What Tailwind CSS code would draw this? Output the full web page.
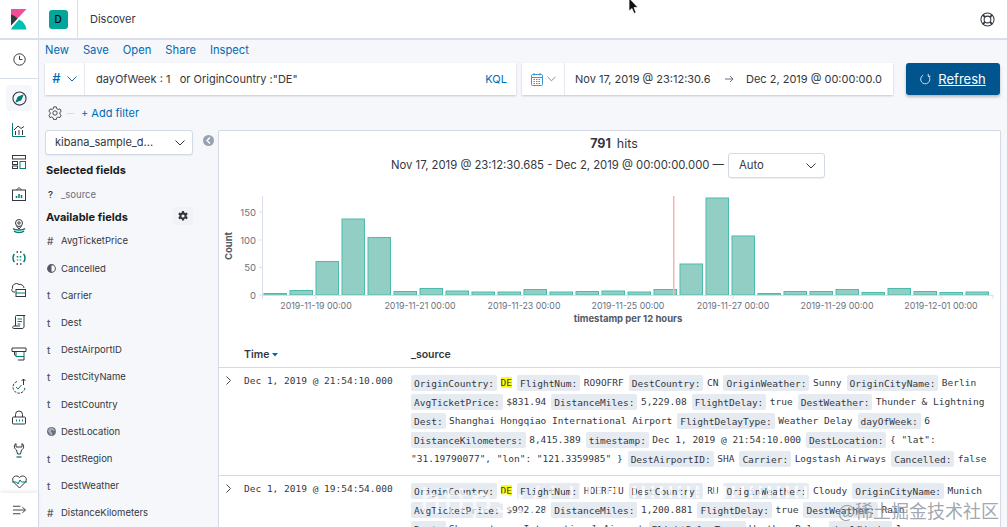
<!DOCTYPE html>
<html lang="en">

<head>
    <meta charset="UTF-8">
    <title>Discover - Kibana</title>
    <script src="https://cdn.jsdelivr.net/npm/@tailwindcss/browser@4"></script>
</head>

<body class="bg-[#f5f7fa] font-['Inter',sans-serif] text-[#343741]">
    <div class="relative w-[1007px] h-[527px] overflow-hidden flex flex-col">
        <!-- top bar -->
        <header class="relative z-20 h-[40px] shrink-0 bg-white border-b-2 border-[#d9dfea] flex items-center">
            <div class="w-[38px] h-full flex items-center justify-center">
                <svg width="16" height="21" viewBox="0 0 16 21">
                    <path fill="#f04e98" d="M0 0h15.5L0 16.5z" />
                    <path fill="#343741" d="M0 5.5v11l6.5-7A13 13 0 0 0 0 5.5z" />
                    <path fill="#00bfb3" d="M8 10.5 1 18.5 0 20.5h15.5A13 13 0 0 0 8 10.5z" />
                </svg>
            </div>
            <div class="w-[39px] h-full border-l border-[#d9dfea] flex items-center justify-center">
                <div class="w-[19px] h-[19px] rounded-[3px] bg-[#00a69b] text-[10px] font-medium text-black flex items-center justify-center">D</div>
            </div>
            <div class="h-full border-l border-[#d9dfea] pl-[12px] flex items-center text-[11px] text-[#343741]">Discover</div>
            <svg class="ml-auto mr-[12px]" width="15" height="15" viewBox="0 0 16 16" fill="none" stroke="#343741" stroke-width="1.1">
                <circle cx="8" cy="8" r="7" />
                <circle cx="8" cy="8" r="3.6" />
                <path d="M3 3l2.4 2.4M13 3l-2.4 2.4M3 13l2.4-2.4M13 13l-2.4-2.4" stroke-width="2" />
            </svg>
        </header>

        <div class="flex flex-1 min-h-0">
            <!-- side nav -->
            <nav class="relative w-[39px] shrink-0 bg-white border-r border-[#d9dfea] flex flex-col items-center">
                <div class="h-[39px] w-full border-b border-[#d9dfea] flex items-center justify-center">
                    <svg width="13" height="13" viewBox="0 0 16 16" fill="none" stroke="#343741" stroke-width="1.2"><circle cx="8" cy="8" r="7" /><path d="M8 3.5V8h3.5" /></svg>
                </div>
                <div class="mt-[6px] w-[26px] h-[26px] rounded-[4px] bg-[#f5f7fa] flex items-center justify-center">
                    <svg width="15" height="15" viewBox="0 0 16 16" fill="none" stroke="#343741" stroke-width="1.2"><circle cx="8" cy="8" r="7" /><path d="M11.5 4.5 9.5 9.5 4.5 11.5 6.5 6.5z" fill="#017d73" stroke="#017d73" /></svg>
                </div>
                <div class="flex flex-col items-center gap-[16px] mt-[11px]">
                    <svg width="16" height="16" viewBox="0 0 16 16" fill="none" stroke="#343741"><path d="M1.5 1v13.5h13" stroke="#017d73" /><path d="M3 8l4-4 3 2.500 3-2M4.500 9v4M8 8v5M11.500 8v5" /></svg>
                    <svg width="16" height="16" viewBox="0 0 16 16" fill="none" stroke="#343741"><rect x="1.500" y="1.500" width="13" height="3.500" /><rect x="1.500" y="7.500" width="5" height="3" /><rect x="1.500" y="12" width="5" height="2.500" /><rect x="9" y="7.500" width="5.500" height="7" stroke="#017d73" /></svg>
                    <svg width="16" height="16" viewBox="0 0 16 16" fill="none" stroke="#343741"><rect x="1.500" y="4" width="13" height="10.500" /><path d="M5.500 4 8 1.500 10.500 4" /><path d="M5.500 12v-2M8 12V8M10.500 12V9" stroke="#017d73" stroke-width="1.500" /></svg>
                    <svg width="16" height="16" viewBox="0 0 16 16" fill="none" stroke="#343741"><circle cx="8" cy="5" r="3.500" /><circle cx="8" cy="5" r="1.200" /><path d="M8 11 5.500 8M8 11l2.500-3" /><path d="M2 10.500c2 2 10 2 12 0M3 13c2 2 8 2 10 0" stroke="#017d73" stroke-width="1.300" /></svg>
                    <svg width="16" height="16" viewBox="0 0 16 16" fill="none" stroke="#343741" stroke-width="1.500"><path d="M5.500 2h1.500M9 2h1.500M5.500 14h1.500M9 14h1.500" /><path d="M3.500 4C1.500 6 1.500 10 3.500 12M12.500 4c2 2 2 6 0 8" stroke="#017d73" /><path d="M6.500 6v1.500M9.500 6v1.500M6.500 9.500v1M9.500 9.500v1" stroke="#017d73" /></svg>
                    <svg width="16" height="16" viewBox="0 0 16 16" fill="none" stroke="#343741"><path d="M4 10H3a2 2 0 0 1-1.500-3.500A4 4 0 0 1 8 2.500a4 4 0 0 1 5 3.500" /><rect x="5" y="7.500" width="9.500" height="7" /><path d="M5 11h9.500" stroke="#017d73" /></svg>
                    <svg width="16" height="16" viewBox="0 0 16 16" fill="none" stroke="#343741"><path d="M4.500 12V2.500a1 1 0 0 1 1-1h8.500v.5M13 1.500V12a2 2 0 0 1-2 2.500H2.500c-1 0-1-2 0-2.500H9" /><path d="M6.500 5h4.500M6.500 7.500h4.500M6.500 10h3" stroke="#017d73" /></svg>
                    <svg width="16" height="16" viewBox="0 0 16 16" fill="none" stroke="#343741"><path d="M1 2h14v3.500H1zM3.500 5.500V9l1.500 1" /><path d="M5 6v4.500h8V6" stroke="#017d73" /><path d="M13 10.500V14H7" /></svg>
                    <svg width="16" height="16" viewBox="0 0 16 16" fill="none" stroke="#343741"><path d="M6 3.500a6 6 0 1 0 8 5.500" stroke-dasharray="2.500 1.200" /><path d="M5 9l2 2 3.500-4" stroke="#017d73" /><path d="M12.500 7V1M10.500 3l2-2 2 2" /></svg>
                    <svg width="16" height="16" viewBox="0 0 16 16" fill="none" stroke="#343741"><path d="M4.500 7V4.500a3.500 3.500 0 0 1 7 0V7" /><rect x="1.500" y="7" width="13" height="7" rx="1" /><path d="M5 10.500h1M8 10.500h1M11 10.500h1" stroke="#017d73" stroke-width="1.800" /></svg>
                    <svg width="16" height="16" viewBox="0 0 16 16" fill="none" stroke="#343741"><path d="M5 1.500C2.500 3 3 7 5.500 8L6.500 12h3l1-4C13 7 13.500 3 11 1.500V5H5z" /><path d="M5.500 15h5" stroke="#017d73" stroke-width="1.300" /></svg>
                    <svg width="17" height="16" viewBox="0 0 16 16" fill="none" stroke="#343741"><path d="M2 8C-1 3 5 0 8 3.500 11 0 17 3 14 8l-6 6z" /><path d="M0.500 8h4.500l1.500 2 2-4 1.500 2h5.500" stroke="#017d73" /></svg>
                </div>
                <div class="absolute bottom-0 left-0 w-full h-[34px] bg-white shadow-[0_-2px_4px_rgba(0,0,0,0.08)] flex items-center justify-center">
                    <svg width="15" height="12" viewBox="0 0 16 12" fill="none" stroke="#343741"><path d="M1 2h8M1 6h13M1 10h8M11 3l3.500 3L11 9" /></svg>
                </div>
            </nav>

            <main class="flex-1 min-w-0 pl-[6px] flex flex-col">
                <div class="h-[23px] shrink-0 pb-[2px] flex items-center gap-[14px] text-[11.200px] text-[#006bb4]">
                    <span>New</span><span>Save</span><span>Open</span><span>Share</span><span>Inspect</span>
                </div>

                <!-- query bar -->
                <div class="h-[32px] shrink-0 flex items-stretch text-[11px]">
                    <div class="w-[471px] bg-white shadow-[0_1px_2px_rgba(0,0,0,0.2)] flex items-center">
                        <div class="w-[40px] h-full border-r border-[#e4e8ef] flex items-center justify-center gap-[6px] text-[13px] text-[#006bb4] font-medium">
                            <span>#</span>
                            <svg width="10" height="6" viewBox="0 0 10 6" fill="none" stroke="#006bb4"><path d="M.5.500 5 5 9.500.500" /></svg>
                        </div>
                        <span class="ml-[11px] whitespace-pre">dayOfWeek : 1   or OriginCountry :"DE"</span>
                        <span class="ml-auto mr-[9px] text-[#006bb4]">KQL</span>
                    </div>
                    <div class="ml-[6px] w-[371px] bg-white shadow-[0_1px_2px_rgba(0,0,0,0.2)] flex items-center whitespace-nowrap">
                        <div class="w-[43px] h-full shrink-0 border-r border-[#e4e8ef] flex items-center justify-center gap-[4px]">
                            <svg width="12" height="13" viewBox="0 0 12 13" fill="none" stroke="#3f93cf"><rect x=".5" y="1.500" width="11" height="11" rx="1" /><path d="M.5 4.500h11M3 0v2.500M9 0v2.500" /><path d="M2.500 6.500h7M2.500 8.500h7M2.500 10.500h7" stroke-dasharray="1.500 1" /></svg>
                            <svg width="9" height="6" viewBox="0 0 10 6" fill="none" stroke="#3f93cf"><path d="M.5.500 5 5 9.500.500" /></svg>
                        </div>
                        <span class="ml-[10px] w-[138px] shrink-0">Nov 17, 2019 @ 23:12:30.6</span>
                        <svg class="ml-[12px] shrink-0" width="9" height="8" viewBox="0 0 9 8" fill="none" stroke="#69707d"><path d="M0 4h8M5 1l3 3-3 3" /></svg>
                        <span class="ml-[12px]">Dec 2, 2019 @ 00:00:00.0</span>
                    </div>
                    <div class="ml-[13px] w-[94px] rounded-[3px] bg-[#00558f] shadow-[0_2px_3px_rgba(0,0,0,0.25)] text-white flex items-center justify-center gap-[7px]">
                        <svg width="11" height="12" viewBox="0 0 12 12" fill="none" stroke="#dbe7f0"><path d="M9 2.500A5 5 0 1 1 3.500 1.800M9 .5v2.500h2.500" /></svg>
                        <span class="text-[13px] underline pt-[1px]">Refresh</span>
                    </div>
                </div>

                <!-- filter row -->
                <div class="h-[35px] shrink-0 flex items-center pt-[1px] text-[11px]">
                    <svg class="ml-[3px]" width="14" height="14" viewBox="0 0 16 16" fill="none" stroke="#343741"><circle cx="8" cy="8" r="2.500" /><path d="M6.500 1h3l.4 2 1.700 1 2-.7 1.500 2.700-1.500 1.300v2L15 10.600l-1.500 2.700-2-.7-1.700 1-.4 2h-3l-.4-2-1.700-1-2 .7L1 10.600l1.500-1.300v-2L1 6l1.500-2.700 2 .7 1.700-1z" /></svg>
                    <span class="ml-[5px] w-[7px] h-px bg-[#d3dae6]"></span>
                    <span class="ml-[7px] text-[#006bb4]">+ Add filter</span>
                </div>

                <div class="flex flex-1 min-h-0">
                    <!-- field list -->
                    <aside class="w-[173px] shrink-0 flex flex-col">
                        <div class="w-[148px] h-[25px] shrink-0 bg-white border border-[#d3dae6] rounded-[3px] shadow-[0_1px_1px_rgba(0,0,0,0.06)] flex items-center pl-[9px] pr-[7px] text-[11px]">
                            <span>kibana_sample_d...</span>
                            <svg class="ml-auto" width="10" height="6" viewBox="0 0 10 6" fill="none" stroke="#343741"><path d="M.5.500 5 5 9.500.500" /></svg>
                        </div>
                        <h3 class="mt-[6px] pl-[1px] h-[18px] leading-[18px] text-[11px] font-bold text-[#1a1c21]">Selected fields</h3>
                        <div class="mt-[9px] pl-[1px] h-[16px] flex items-center text-[9.500px] text-[#69707d]"><span class="w-[15px] text-[#343741] font-medium pl-[2px]">?</span>_source</div>
                        <div class="mt-[6px] pl-[1px] h-[20px] flex items-center">
                            <h3 class="text-[11px] font-bold text-[#1a1c21]">Available fields</h3>
                            <div class="ml-auto mr-[25px] w-[20px] h-[18px] -mt-[2px] rounded-[3px] bg-[#f0f2f6] flex items-center justify-center">
                                <svg width="10" height="10" viewBox="0 0 16 16" fill="#343741"><path fill-rule="evenodd" d="M6.500 0h3l.5 2.500 1.500.8L14 2.300 15.500 5l-1.800 1.800v1.700l1.800 1.800-1.500 2.700-2.500-1-1.500.8-.5 2.500h-3L6 13l-1.500-.8-2.500 1L.5 10.300l1.800-1.800V6.800L.5 5 2 2.300l2.500 1L6 2.500zM8 5.500a2.500 2.500 0 1 0 0 5 2.500 2.500 0 0 0 0-5z" /></svg>
                            </div>
                        </div>
                        <ul class="mt-[2px] pl-[1px] text-[9.500px] text-[#343741] [&>li]:h-[27.200px] [&>li]:flex [&>li]:items-center [&>li>span]:w-[15px] [&>li>span]:pl-[1px] [&>li>span]:text-[10px] [&>li>span]:font-medium [&>li>span]:text-[#535966]">
                            <li><span>#</span>AvgTicketPrice</li>
                            <li><span><svg width="9" height="9" viewBox="0 0 10 10"><circle cx="5" cy="5" r="4.300" fill="white" stroke="#535966" stroke-width="1.200" /><path d="M5 .7a4.300 4.300 0 0 1 0 8.600z" fill="#535966" transform="rotate(180 5 5)" /></svg></span>Cancelled</li>
                            <li><span>t</span>Carrier</li>
                            <li><span>t</span>Dest</li>
                            <li><span>t</span>DestAirportID</li>
                            <li><span>t</span>DestCityName</li>
                            <li><span>t</span>DestCountry</li>
                            <li><span><svg width="9" height="9" viewBox="0 0 10 10"><circle cx="5" cy="5" r="5" fill="#69707d" /><path d="M5 .5c2 1 4 2 3.500 4-1.500 0-2-1.500-3-1.500S3.500 4.500 5 5.500 6 9 5 9.500C3 8 2.500 6 1 4.500 2 2 3.500 1 5 .5z" fill="#d3dae6" opacity=".6" /></svg></span>DestLocation</li>
                            <li><span>t</span>DestRegion</li>
                            <li><span>t</span>DestWeather</li>
                            <li><span>#</span>DistanceKilometers</li>
                        </ul>
                    </aside>

                    <!-- results panel -->
                    <section class="relative w-[783px] shrink-0 bg-white border-l border-t border-r border-[#d3dae6] rounded-t-[2px] flex flex-col">
                        <div class="absolute left-[-16px] top-[4px] w-[11px] h-[11px] rounded-full bg-[#98a2b3] flex items-center justify-center">
                            <svg width="5" height="7" viewBox="0 0 5 7" fill="none" stroke="white" stroke-width="1.300"><path d="M4 .5 1 3.500l3 3" /></svg>
                        </div>
                        <div class="mt-[4px] h-[18px] shrink-0 flex items-center justify-center pl-[9px] text-[12.500px]"><b class="font-bold mr-[6px]">791</b> hits</div>
                        <div class="h-[25px] shrink-0 flex items-center pl-[172px] text-[11.300px] whitespace-nowrap">
                            <span>Nov 17, 2019 @ 23:12:30.685 - Dec 2, 2019 @ 00:00:00.000 —</span>
                            <div class="ml-[4px] w-[97px] h-[25px] bg-white border border-[#d3dae6] rounded-[3px] shadow-[0_1px_1px_rgba(0,0,0,0.06)] flex items-center pl-[10px] pr-[8px]">
                                <span>Auto</span>
                                <svg class="ml-auto" width="10" height="6" viewBox="0 0 10 6" fill="none" stroke="#343741"><path d="M.5.500 5 5 9.500.500" /></svg>
                            </div>
                        </div>

                        <!-- histogram, coordinates follow the page -->
                        <svg id="chart" class="mt-[13px] shrink-0" width="781" height="135" viewBox="218 191 781 135" font-family="Inter, sans-serif"></svg>

                        <div class="h-[42px] shrink-0 flex items-end pb-[4px] border-b border-[#d3dae6] text-[10.500px] font-semibold">
                            <div class="w-[167px] ml-[25px] flex items-center gap-[3px]">Time
                                <svg width="6" height="4" viewBox="0 0 6 4"><path d="M0 0h6L3 3.500z" fill="#006bb4" /></svg>
                            </div>
                            <div>_source</div>
                        </div>

                        <!-- documents -->
                        <div class="flex shrink-0 border-b border-[#d3dae6] font-['DejaVu_Sans_Mono',monospace] text-[9.500px] h-[108px] pt-[6px]">
                            <svg class="ml-[7px] mt-[2px] shrink-0" width="5" height="9" viewBox="0 0 5 9" fill="none" stroke="#343741" stroke-width=".9"><path d="M.5.500 4.500 4.500.5 8.500" /></svg>
                            <div class="w-[167px] ml-[13px] shrink-0 leading-[14px]">Dec 1, 2019 @ 21:54:10.000</div>
                            <dl class="-mt-[1px] leading-[19px] whitespace-nowrap [&>dt]:inline [&>dt]:rounded-[2px] [&>dt]:bg-[#e6ebf2] [&>dt]:px-[3px] [&>dt]:py-[2.500px] [&>dt]:mr-[3.500px] [&>dd]:inline [&>dd]:mr-[5px]">
                                <dt>OriginCountry:</dt><dd><mark class="bg-[#ffff00] text-[#343741]">DE</mark></dd><dt>FlightNum:</dt><dd>RO9OFRF</dd><dt>DestCountry:</dt><dd>CN</dd><dt>OriginWeather:</dt><dd>Sunny</dd><dt>OriginCityName:</dt><dd>Berlin</dd><br>
                                <dt>AvgTicketPrice:</dt><dd>$831.94</dd><dt>DistanceMiles:</dt><dd>5,229.08</dd><dt>FlightDelay:</dt><dd>true</dd><dt>DestWeather:</dt><dd>Thunder &amp; Lightning</dd><br>
                                <dt>Dest:</dt><dd>Shanghai Hongqiao International Airport</dd><dt>FlightDelayType:</dt><dd>Weather Delay</dd><dt>dayOfWeek:</dt><dd>6</dd><br>
                                <dt>DistanceKilometers:</dt><dd>8,415.389</dd><dt>timestamp:</dt><dd>Dec 1, 2019 @ 21:54:10.000</dd><dt>DestLocation:</dt><dd>{ "lat":</dd><br>
                                <dd>"31.19790077", "lon": "121.3359985" }</dd><dt>DestAirportID:</dt><dd>SHA</dd><dt>Carrier:</dt><dd>Logstash Airways</dd><dt>Cancelled:</dt><dd>false</dd>
                            </dl>
                        </div>
                        <div class="flex shrink-0 font-['DejaVu_Sans_Mono',monospace] text-[9.500px] pt-[6px]">
                            <svg class="ml-[7px] mt-[2px] shrink-0" width="5" height="9" viewBox="0 0 5 9" fill="none" stroke="#343741" stroke-width=".9"><path d="M.5.500 4.500 4.500.5 8.500" /></svg>
                            <div class="w-[167px] ml-[13px] shrink-0 leading-[14px]">Dec 1, 2019 @ 19:54:54.000</div>
                            <dl class="-mt-[1px] leading-[19px] whitespace-nowrap [&>dt]:inline [&>dt]:rounded-[2px] [&>dt]:bg-[#e6ebf2] [&>dt]:px-[3px] [&>dt]:py-[2.500px] [&>dt]:mr-[3.500px] [&>dd]:inline [&>dd]:mr-[5px]">
                                <dt>OriginCountry:</dt><dd><mark class="bg-[#ffff00] text-[#343741]">DE</mark></dd><dt>FlightNum:</dt><dd>HOERFIU</dd><dt>DestCountry:</dt><dd>RU</dd><dt>OriginWeather:</dt><dd>Cloudy</dd><dt>OriginCityName:</dt><dd>Munich</dd><br>
                                <dt>AvgTicketPrice:</dt><dd>$992.28</dd><dt>DistanceMiles:</dt><dd>1,200.881</dd><dt>FlightDelay:</dt><dd>true</dd><dt>DestWeather:</dt><dd>Rain</dd><br>
                                <dt>Dest:</dt><dd>Sheremetyevo International Airport</dd><dt>FlightDelayType:</dt><dd>Weather Delay</dd><dt>dayOfWeek:</dt><dd>1</dd>
                            </dl>
                        </div>
                    </section>
                </div>
            </main>
        </div>

        <!-- overlays: mouse pointer and image watermarks -->
        <svg class="absolute left-[629px] top-0 z-30" width="11" height="16" viewBox="0 0 11 16"><path d="M0 -2 0 11 3 8.500 5 13.500 7 12.500 5 7.500 9 7.500z" fill="#111" stroke="white" stroke-width=".7" /></svg>
        <div class="absolute z-30 left-[420px] top-[480px] text-[36px] leading-[40px] tracking-[2px] text-white/70 pointer-events-none">https://</div>
        <div class="absolute z-30 left-[570px] top-[486px] w-[240px] h-[12px] bg-[repeating-linear-gradient(90deg,rgba(255,255,255,0.75)_0,rgba(255,255,255,0.75)_3px,transparent_3px,transparent_9px)] pointer-events-none"></div>
        <div class="absolute z-30 left-[838px] top-[499px] text-[18px] leading-[22px] whitespace-nowrap text-[#8a8f99]/80 font-['Noto_Sans_CJK_SC',sans-serif] pointer-events-none">@稀土掘金技术社区</div>
    </div>

    <script>
        // 12 hour buckets read off the histogram
        const heights = [1.5, 4.5, 33.5, 76, 57.5, 3.5, 6.5, 4, 3, 3, 5.5, 3, 3.5, 4, 3, 5.5, 31, 97, 59, 1.5, 3.5, 3.5, 5.5, 2.5, 6.5, 3.5, 2.5, 3];
        const yTicks = [[150, 212], [100, 240], [50, 267.5], [0, 295]];
        const xTicks = [[315, '2019-11-19 00:00'], [419, '2019-11-21 00:00'], [523, '2019-11-23 00:00'], [627, '2019-11-25 00:00'], [732, '2019-11-27 00:00'], [836, '2019-11-29 00:00'], [940, '2019-12-01 00:00']];
        const baseline = 295;

        let svg = '';
        heights.forEach((h, i) => {
            const x = 263 + 26 * i;
            svg += `<rect x="${x}" y="${baseline - h}" width="22.5" height="${h}" fill="#92cec4" stroke="#4bbbab" stroke-width="1"/>`;
        });
        svg += `<path d="M261.500 196v99.500H992" fill="none" stroke="#d9dfea"/>`;
        svg += `<rect x="672" y="196" width="1.500" height="99" fill="#f5b5b5"/>`;
        yTicks.forEach(([label, y]) => {
            svg += `<path d="M258 ${y}h3.500" stroke="#d9dfea"/><text x="255" y="${y + 3.5}" text-anchor="end" font-size="9.500" fill="#69707d">${label}</text>`;
        });
        xTicks.forEach(([x, label]) => {
            svg += `<path d="M${x} 295v4" stroke="#d9dfea"/><text x="${x}" y="308.500" text-anchor="middle" font-size="8.800" fill="#69707d">${label}</text>`;
        });
        svg += `<path d="M992 295v4M261.500 295v4" stroke="#d9dfea"/>`;
        svg += `<text x="627" y="322" text-anchor="middle" font-size="9.500" font-weight="700" fill="#535966">timestamp per 12 hours</text>`;
        svg += `<text x="231" y="246" text-anchor="middle" font-size="9.500" font-weight="700" fill="#535966" transform="rotate(-90 231 246)">Count</text>`;
        document.getElementById('chart').innerHTML = svg;
    </script>
</body>

</html>
